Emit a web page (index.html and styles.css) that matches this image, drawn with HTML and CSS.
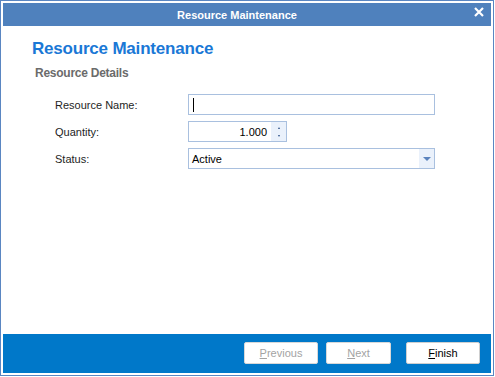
FILE: index.html
```html
<!DOCTYPE html>
<html>
<head>
<meta charset="utf-8">
<link rel="stylesheet" href="styles.css">
</head>
<body>
<div class="window">
  <div class="titlebar">
    <span></span>
    <span class="title">Resource Maintenance</span>
    <span class="close"><svg width="10" height="10" viewBox="0 0 10 10"><path d="M1 1L9 9M9 1L1 9" stroke="#fff" stroke-width="2.2" fill="none"/></svg></span>
  </div>
  <div class="content">
    <h1 class="heading">Resource Maintenance</h1>
    <h2 class="subheading">Resource Details</h2>
    <div class="form">
      <label class="label">Resource Name:</label>
      <div class="field text"><span class="caret"></span></div>
      <label class="label">Quantity:</label>
      <div class="field spin">
        <span class="value">1.000</span>
        <span class="spinbtns">
          <span class="up"></span>
          <span class="down"></span>
        </span>
      </div>
      <label class="label">Status:</label>
      <div class="field combo">
        <span class="value">Active</span>
        <span class="dropbtn"><span class="tri"></span></span>
      </div>
    </div>
  </div>
  <div class="footer">
    <button class="btn disabled"><u>P</u>revious</button>
    <button class="btn disabled next"><u>N</u>ext</button>
    <button class="btn"><u>F</u>inish</button>
  </div>
</div>
</body>
</html>
```
FILE: styles.css
```css
* { box-sizing: border-box; }
html, body { margin: 0; padding: 0; background: #fff; }
body { font-family: "Liberation Sans", Arial, sans-serif; }
.window {
  width: 494px;
  height: 376px;
  border: 1px solid #5a86c2;
  padding: 2px;
  display: flex;
  flex-direction: column;
  background: #fff;
}
.titlebar {
  height: 23px;
  background: #4f81bd;
  display: grid;
  grid-template-columns: 1fr auto 1fr;
  align-items: center;
  color: #fff;
}
.title {
  font-weight: bold;
  font-size: 11px;
  line-height: 14px;
  margin-right: 20px;
}
.close {
  justify-self: end;
  padding-right: 7px;
  display: flex;
  margin-top: -6px;
}
.content {
  flex: 1;
  padding: 13px 0 0 29px;
}
.heading {
  margin: 0;
  font-size: 17px;
  line-height: 20px;
  letter-spacing: -0.2px;
  color: #1a78d6;
  font-weight: bold;
}
.subheading {
  margin: 7px 0 0 3px;
  font-size: 12px;
  line-height: 14px;
  letter-spacing: -0.25px;
  color: #6b6b6b;
  font-weight: bold;
}
.form {
  margin: 14px 0 0 23px;
  display: grid;
  grid-template-columns: 133px auto;
  row-gap: 6px;
  align-items: center;
  justify-content: start;
}
.label {
  font-size: 11px;
  color: #1e1e1e;
  line-height: 13px;
  padding-top: 1px;
}
.field {
  height: 21px;
  border: 1px solid #a9c0df;
  background: #fff;
  display: flex;
  align-items: center;
  font-size: 11px;
  color: #000;
}
.text, .combo { width: 247px; }
.caret {
  width: 1px;
  height: 14px;
  background: #000;
  margin-left: 4px;
}
.spin { width: 99px; }
.spin .value {
  flex: 1;
  text-align: right;
  padding-right: 4px;
}
.spinbtns {
  width: 15px;
  align-self: stretch;
  background: #eaf1fb;
  display: flex;
  flex-direction: column;
  align-items: center;
  justify-content: space-between;
  padding: 5px 0 4px;
}
.up {
  width: 0; height: 0;
  border-left: 1.5px solid transparent;
  border-right: 1.5px solid transparent;
  border-bottom: 2px solid #2b4f86;
}
.down {
  width: 0; height: 0;
  border-left: 1.5px solid transparent;
  border-right: 1.5px solid transparent;
  border-top: 2px solid #2b4f86;
}
.combo .value {
  flex: 1;
  padding-left: 3px;
}
.dropbtn {
  width: 15px;
  align-self: stretch;
  background: #eaf1fb;
  display: flex;
  align-items: center;
  justify-content: center;
}
.tri {
  width: 0; height: 0;
  border-left: 4px solid transparent;
  border-right: 4px solid transparent;
  border-top: 4px solid #5b83bd;
  margin-top: 1px;
}
.footer {
  height: 39px;
  background: #0078c9;
  display: flex;
  justify-content: flex-end;
  align-items: flex-start;
  gap: 8px;
  padding: 8px 11px 0 0;
}
.btn {
  width: 74px;
  height: 22px;
  background: #fff;
  border: 1px solid #cfcfcf;
  border-radius: 2px;
  font-family: "Liberation Sans", Arial, sans-serif;
  font-size: 11px;
  color: #000;
  padding: 0;
}
.btn.next { width: 65px; margin-right: 7px; }
.btn.disabled { color: #a3a3a3; border-color: #d8d8d8; }
```
